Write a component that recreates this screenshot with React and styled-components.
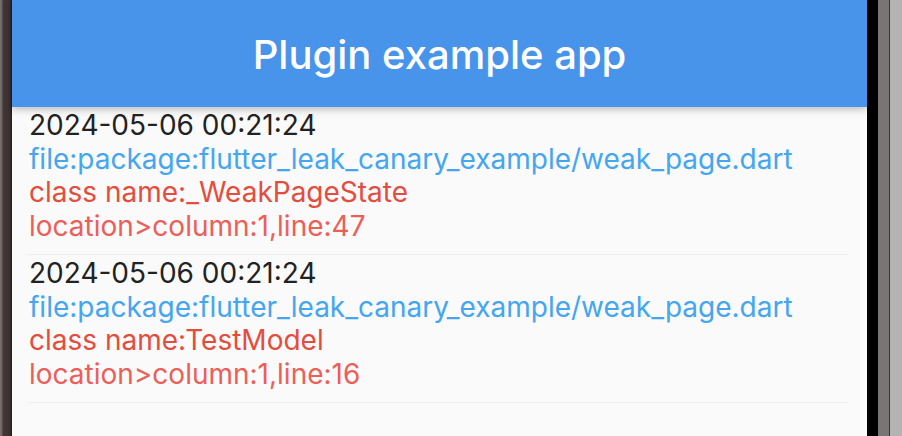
import React from "react";
import styled, { createGlobalStyle } from "styled-components";

const GlobalStyle = createGlobalStyle`
  html, body {
    margin: 0;
    padding: 0;
    background: #b3b3b3;
  }
  body {
    font-family: Inter, "Noto Sans", "Liberation Sans", sans-serif;
  }
`;

const Frame = styled.div`
  display: flex;
  width: 902px;
  height: 436px;
  overflow: hidden;
`;

const LeftBezel = styled.div`
  width: 12px;
  flex-shrink: 0;
  background: linear-gradient(
    to right,
    #7c7272 0px,
    #6a6060 2px,
    #433838 3px,
    #3a3030 10px,
    #1e1818 12px
  );
`;

const RightBezel = styled.div`
  display: flex;
  flex-shrink: 0;
`;

const BezelStrip = styled.div`
  width: ${(p) => p.w}px;
  background: ${(p) => p.color};
`;

const Screen = styled.div`
  flex: 1;
  display: flex;
  flex-direction: column;
  background: #fafafa;
  position: relative;
`;

const AppBar = styled.header`
  height: 107px;
  flex-shrink: 0;
  display: flex;
  align-items: center;
  justify-content: center;
  background: #4894ea;
  box-shadow: 0 2px 8px rgba(0, 0, 0, 0.28);
  position: relative;
  z-index: 1;
`;

const Title = styled.h1`
  margin: 0;
  padding-top: 2px;
  color: #ffffff;
  font-size: 40px;
  font-weight: 500;
  letter-spacing: 0px;
`;

const List = styled.div`
  display: flex;
  flex-direction: column;
  padding: 0 19px 0 16px;
`;

const Item = styled.div`
  padding: 2px 0 11px 1px;
  border-bottom: 1px solid #eeeeee;
`;

const Line = styled.div`
  font-size: 28px;
  line-height: 33.5px;
  white-space: nowrap;
  color: ${(p) => p.color};
`;

const leaks = [
  {
    time: "2024-05-06 00:21:24",
    file: "file:package:flutter_leak_canary_example/weak_page.dart",
    className: "_WeakPageState",
    line: 47,
  },
  {
    time: "2024-05-06 00:21:24",
    file: "file:package:flutter_leak_canary_example/weak_page.dart",
    className: "TestModel",
    line: 16,
  },
];

export default function App() {
  return (
    <>
      <GlobalStyle />
      <Frame>
        <LeftBezel />
        <Screen>
          <AppBar>
            <Title>Plugin example app</Title>
          </AppBar>
          <List>
            {leaks.map((leak, i) => (
              <Item key={i}>
                <Line color="#222222">{leak.time}</Line>
                <Line color="#45a6f0">{leak.file}</Line>
                <Line color="#e44d3d">class name:{leak.className}</Line>
                <Line color="#ec5f59">
                  location&gt;column:1,line:{leak.line}
                </Line>
              </Item>
            ))}
          </List>
        </Screen>
        <RightBezel>
          <BezelStrip w={11} color="#000000" />
          <BezelStrip w={11} color="#7a7474" />
          <BezelStrip w={1} color="#3a3535" />
          <BezelStrip w={12} color="#b3b3b3" />
        </RightBezel>
      </Frame>
    </>
  );
}
